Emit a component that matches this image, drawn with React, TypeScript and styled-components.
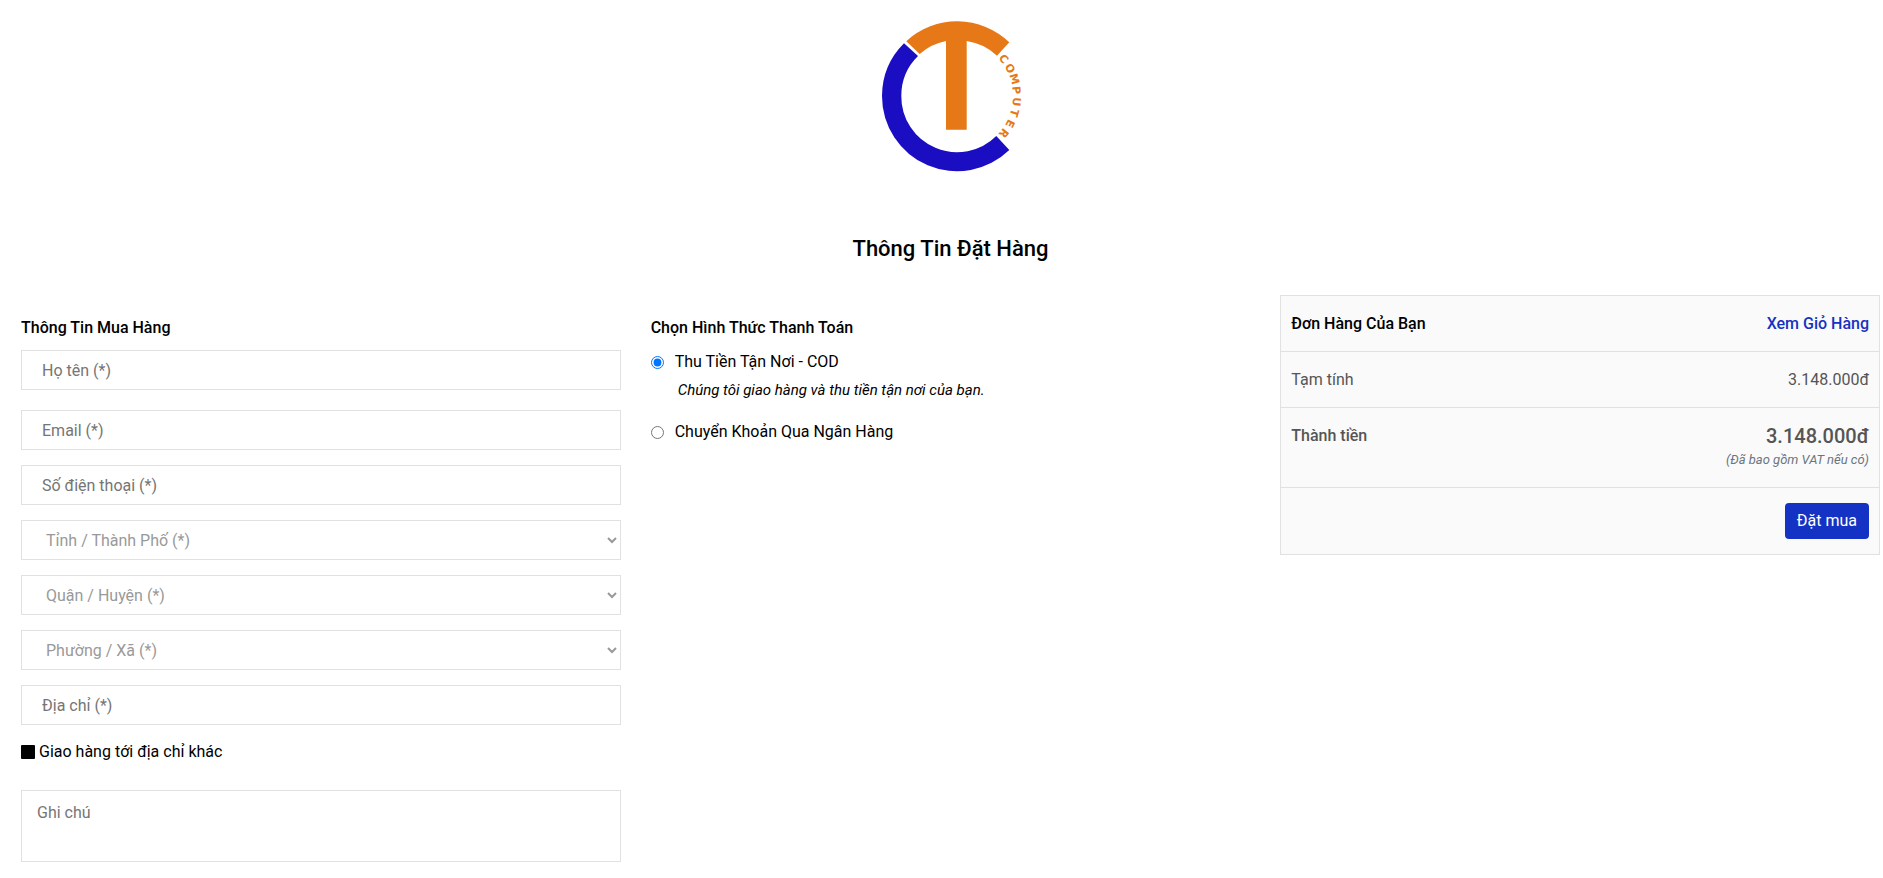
import React from "react";
import styled, { createGlobalStyle } from "styled-components";

const GlobalStyle = createGlobalStyle`
  *, *::before, *::after { box-sizing: border-box; }
  body {
    margin: 0;
    background: #fff;
    color: #000;
    font-family: Roboto, "Liberation Sans", sans-serif;
    font-size: 16px;
    line-height: 24px;
  }
  input, select, textarea, button { font: inherit; }
`;

const Page = styled.div`
  padding: 0 3px 16px 21px;
`;

const Brand = styled.a`
  display: block;
  width: 180px;
  margin: 0 auto;
`;

const LogoDrawing = styled.svg`
  display: block;
  width: 100%;
`;

const Title = styled.h1`
  margin: 43px 0 32px;
  font-size: 22px;
  line-height: 28px;
  font-weight: 500;
  text-align: center;
`;

const Columns = styled.form`
  display: grid;
  grid-template-columns: repeat(3, minmax(0, 1fr));
  gap: 30px;
  align-items: start;
`;

const Section = styled.section`
  display: flex;
  flex-direction: column;
  padding-top: 21px;
`;

const SectionTitle = styled.h2`
  margin: 0 0 10px;
  font-size: 16px;
  line-height: 24px;
  font-weight: 500;
`;

const Fields = styled.div`
  display: flex;
  flex-direction: column;
  gap: 15px;
`;

const Field = styled.input<{ $spaced?: boolean }>`
  width: 100%;
  height: 40px;
  margin-bottom: ${(p) => (p.$spaced ? "5px" : "0")};
  padding: 0 20px;
  border: 1px solid #e1e1e1;
  border-radius: 0;
  background: #fff;
  outline: none;
  &::placeholder { color: #757575; opacity: 1; }
`;

const Picker = styled.select`
  width: 100%;
  height: 40px;
  padding: 0 0 0 20px;
  border: 1px solid #e1e1e1;
  border-radius: 0;
  background: #fff;
  color: #999;
`;

const CheckRow = styled.label`
  display: flex;
  align-items: center;
  gap: 4px;
  margin: 15px 0 26px;
`;

const Check = styled.input`
  appearance: none;
  width: 14px;
  height: 14px;
  margin: 0;
  border-radius: 1px;
  background: #000;
`;

const Note = styled.textarea`
  display: block;
  width: 100%;
  height: 72px;
  padding: 10px 15px;
  border: 1px solid #e1e1e1;
  resize: none;
  &::placeholder { color: #757575; opacity: 1; }
`;

const Option = styled.label`
  display: flex;
  align-items: center;
  gap: 11px;
`;

const Radio = styled.input`
  width: 13px;
  height: 13px;
  margin: 0;
`;

const OptionHint = styled.p`
  margin: 4px 0 18px 27px;
  font-size: 15px;
  font-style: italic;
`;

const Summary = styled.table`
  width: 100%;
  border-collapse: collapse;
  border: 1px solid #e1e1e1;
  background: #fafafa;
  color: #555;
`;

const SummaryRow = styled.tr`
  border-top: 1px solid #e1e1e1;
`;

const HeadCell = styled.th<{ $strong?: boolean; $dark?: boolean }>`
  padding: 16px 10px 15px;
  color: ${(p) => (p.$dark ? "#000" : "#555")};
  font-weight: ${(p) => (p.$strong ? 500 : 400)};
  text-align: left;
  vertical-align: top;
`;

const ValueCell = styled.td`
  padding: 16px 10px 15px;
  text-align: right;
`;

const ActionCell = styled.td`
  padding: 15px 10px;
`;

const CartLink = styled.a`
  color: #1432c3;
  font-weight: 500;
  text-decoration: none;
`;

const Total = styled.strong`
  display: block;
  font-size: 20px;
  font-weight: 500;
`;

const TaxHint = styled.small`
  display: block;
  color: #6c757d;
  font-size: 13px;
  font-style: italic;
`;

const OrderButton = styled.button`
  display: block;
  height: 36px;
  margin: 0 0 0 auto;
  padding: 0 12px;
  border: 0;
  border-radius: 4px;
  background: #1432c3;
  color: #fff;
`;

const letters = "COMPUTER".split("");

function Logo() {
  return (
    <LogoDrawing viewBox="0 0 180 192" role="img" aria-label="CT Computer">
      <path
        d="M43 43.3A75 75 0 0 0 21 96A75 75 0 0 0 148.3 150L135.3 136A55.7 55.7 0 0 1 40.3 96A55.7 55.7 0 0 1 57 56Z"
        fill="#1a0dc2"
      />
      <path
        d="M45.3 41.3A75 75 0 0 1 148.3 42.3L136 55.7A56 56 0 0 0 105.7 41V129.7H85V41A56 56 0 0 0 58.7 54Z"
        fill="#e67817"
      />
      <g
        fill="#e67817"
        fontFamily="DejaVu Sans, sans-serif"
        fontWeight="700"
        fontSize="11"
        textAnchor="middle"
      >
        {letters.map((letter, i) => (
          <text key={i} x="96" y="40" transform={`rotate(${51.5 + i * 11} 96 96)`}>
            {letter}
          </text>
        ))}
      </g>
    </LogoDrawing>
  );
}

export default function App() {
  return (
    <>
      <GlobalStyle />
      <Page>
        <Brand href="#">
          <Logo />
        </Brand>
        <Title>Thông Tin Đặt Hàng</Title>
        <Columns>
          <Section>
            <SectionTitle>Thông Tin Mua Hàng</SectionTitle>
            <Fields>
              <Field $spaced type="text" aria-label="Họ tên" placeholder="Họ tên (*)" />
              <Field type="email" aria-label="Email" placeholder="Email (*)" />
              <Field type="tel" aria-label="Số điện thoại" placeholder="Số điện thoại (*)" />
              <Picker aria-label="Tỉnh / Thành Phố">
                <option>Tỉnh / Thành Phố (*)</option>
              </Picker>
              <Picker aria-label="Quận / Huyện">
                <option>Quận / Huyện (*)</option>
              </Picker>
              <Picker aria-label="Phường / Xã">
                <option>Phường / Xã (*)</option>
              </Picker>
              <Field type="text" aria-label="Địa chỉ" placeholder="Địa chỉ (*)" />
            </Fields>
            <CheckRow>
              <Check type="checkbox" />
              Giao hàng tới địa chỉ khác
            </CheckRow>
            <Note aria-label="Ghi chú" placeholder="Ghi chú" />
          </Section>

          <Section>
            <SectionTitle>Chọn Hình Thức Thanh Toán</SectionTitle>
            <Option>
              <Radio type="radio" name="payment" defaultChecked />
              Thu Tiền Tận Nơi - COD
            </Option>
            <OptionHint>Chúng tôi giao hàng và thu tiền tận nơi của bạn.</OptionHint>
            <Option>
              <Radio type="radio" name="payment" />
              Chuyển Khoản Qua Ngân Hàng
            </Option>
          </Section>

          <Summary>
            <tbody>
              <SummaryRow>
                <HeadCell scope="row" $strong $dark>Đơn Hàng Của Bạn</HeadCell>
                <ValueCell>
                  <CartLink href="#">Xem Giỏ Hàng</CartLink>
                </ValueCell>
              </SummaryRow>
              <SummaryRow>
                <HeadCell scope="row">Tạm tính</HeadCell>
                <ValueCell>3.148.000đ</ValueCell>
              </SummaryRow>
              <SummaryRow>
                <HeadCell scope="row" $strong>Thành tiền</HeadCell>
                <ValueCell>
                  <Total>3.148.000đ</Total>
                  <TaxHint>(Đã bao gồm VAT nếu có)</TaxHint>
                </ValueCell>
              </SummaryRow>
              <SummaryRow>
                <ActionCell colSpan={2}>
                  <OrderButton type="button">Đặt mua</OrderButton>
                </ActionCell>
              </SummaryRow>
            </tbody>
          </Summary>
        </Columns>
      </Page>
    </>
  );
}
